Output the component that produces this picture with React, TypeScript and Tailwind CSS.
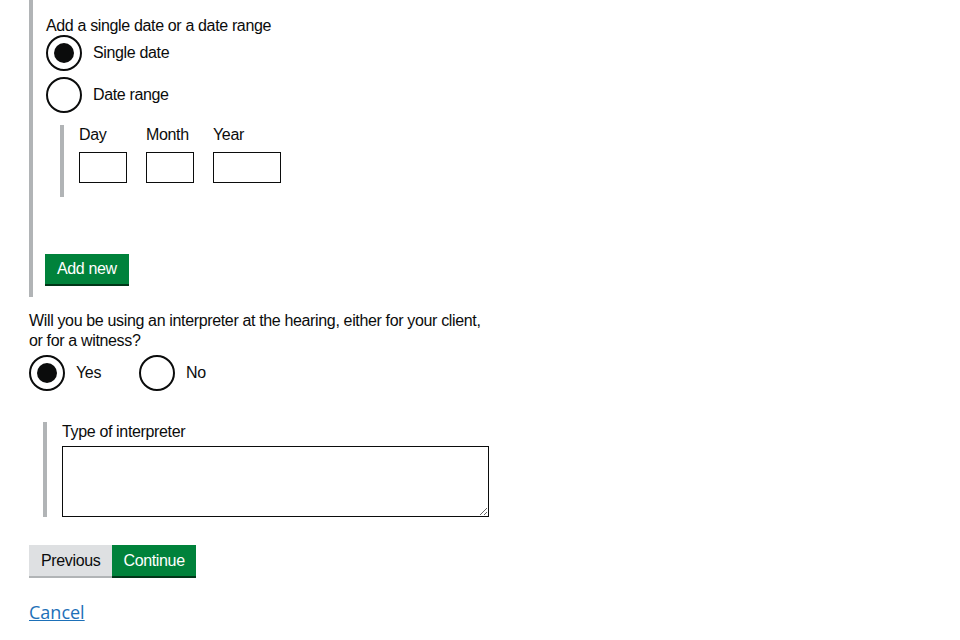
import React, { useState } from "react";

const Radio = ({
  checked,
  label,
  onSelect,
  className = "",
}: {
  checked: boolean;
  label: string;
  onSelect: () => void;
  className?: string;
}) => (
  <label className={`flex items-center cursor-pointer ${className}`} onClick={onSelect}>
    <span className="flex h-[36px] w-[36px] shrink-0 items-center justify-center rounded-full border-2 border-[#0b0c0c] bg-white">
      {checked && <span className="block h-[20px] w-[20px] rounded-full bg-[#0b0c0c]" />}
    </span>
    <span className="ml-[11px] leading-5">{label}</span>
  </label>
);

export default function App() {
  const [dateType, setDateType] = useState("single");
  const [interpreter, setInterpreter] = useState("yes");

  return (
    <div
      className="min-h-screen bg-white pl-[29px] text-[16px] tracking-[-0.35px] text-[#0b0c0c]"
      style={{ fontFamily: '"Liberation Sans", Arial, sans-serif' }}
    >
      <div className="border-l-4 border-[#b1b4b6] pl-[13px] pt-[16px] pb-[13px]">
        <p className="leading-5">Add a single date or a date range</p>
        <div className="-mt-[1px] flex flex-col gap-[6px]">
          <Radio checked={dateType === "single"} label="Single date" onSelect={() => setDateType("single")} />
          <Radio checked={dateType === "range"} label="Date range" onSelect={() => setDateType("range")} />
        </div>

        <div className="ml-[14px] mt-[12px] border-l-4 border-[#b1b4b6] pl-[15px] pb-[14px]">
          <div className="flex gap-[19px]">
            <div className="flex flex-col">
              <span className="leading-5">Day</span>
              <input className="mt-[7px] h-[31px] w-[48px] border border-[#0b0c0c] outline-none" />
            </div>
            <div className="flex flex-col">
              <span className="leading-5">Month</span>
              <input className="mt-[7px] h-[31px] w-[48px] border border-[#0b0c0c] outline-none" />
            </div>
            <div className="flex flex-col">
              <span className="leading-5">Year</span>
              <input className="mt-[7px] h-[31px] w-[68px] border border-[#0b0c0c] outline-none" />
            </div>
          </div>
        </div>

        <button className="-ml-[1px] mt-[57px] h-[30px] bg-[#00823b] px-[12px] leading-5 text-white shadow-[0_2px_0_#003618]">
          Add new
        </button>
      </div>

      <p className="mt-[14px] max-w-[462px] leading-5">
        Will you be using an interpreter at the hearing, either for your client, or for a witness?
      </p>
      <div className="mt-[4px] flex">
        <Radio
          checked={interpreter === "yes"}
          label="Yes"
          onSelect={() => setInterpreter("yes")}
          className="mr-[38px]"
        />
        <Radio checked={interpreter === "no"} label="No" onSelect={() => setInterpreter("no")} />
      </div>

      <div className="ml-[14px] mt-[31px] border-l-4 border-[#b1b4b6] pl-[15px]">
        <label className="block leading-5">Type of interpreter</label>
        <textarea className="mt-[4px] block h-[71px] w-[427px] border border-[#0b0c0c] outline-none" />
      </div>

      <div className="mt-[28px] flex">
        <button className="h-[31px] bg-[#dee0e2] px-[12px] leading-5 text-[#0b0c0c] shadow-[0_2px_0_#b1b4b6]">
          Previous
        </button>
        <button className="h-[31px] bg-[#00823b] px-[11px] leading-5 text-white shadow-[0_2px_0_#003618]">
          Continue
        </button>
      </div>

      <div className="mt-[26px] pb-[10px]">
        <a
          href="#"
          className="text-[18px] leading-5 tracking-normal text-[#1d70b8] underline"
          style={{ fontFamily: '"Open Sans", sans-serif' }}
        >
          Cancel
        </a>
      </div>
    </div>
  );
}
